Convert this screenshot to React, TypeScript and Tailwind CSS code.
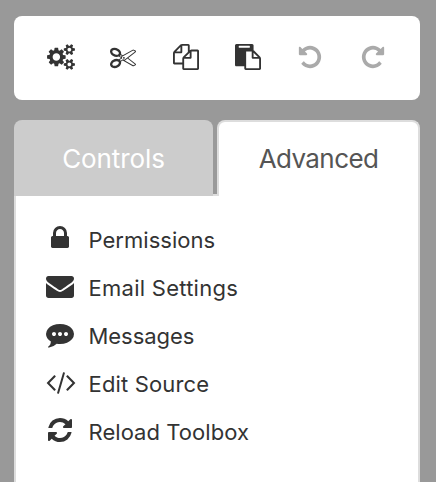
const COGS =
  'M896 896q0-106-75-181t-181-75-181 75-75 181 75 181 181 75 181-75 75-181zm768 512q0-52-38-90t-90-38-90 38-38 90q0 53 37.5 90.5t90.5 37.5 90.5-37.5 37.5-90.5zm0-1024q0-52-38-90t-90-38-90 38-38 90q0 53 37.5 90.5t90.5 37.5 90.5-37.5 37.5-90.5zm-384 421v185q0 10-7 19.5t-16 10.5l-155 24q-11 35-32 76 34 48 90 115 7 11 7 20 0 12-7 19-23 30-82.5 89.5t-78.5 59.5q-11 0-21-7l-115-90q-37 19-77 31-11 108-23 155-7 24-30 24h-186q-11 0-20-7.5t-10-17.5l-23-153q-34-10-75-31l-118 89q-7 7-20 7-11 0-21-8-144-133-144-160 0-9 7-19 10-14 41-53t47-61q-23-44-35-82l-152-24q-10-1-17-9.5t-7-19.5v-185q0-10 7-19.5t16-10.5l155-24q11-35 32-76-34-48-90-115-7-11-7-20 0-12 7-20 22-30 82-89t79-59q11 0 21 7l115 90q34-18 77-32 11-108 23-154 7-24 30-24h186q11 0 20 7.5t10 17.5l23 153q34 10 75 31l118-89q8-7 20-7 11 0 21 8 144 133 144 160 0 8-7 19-12 16-42 54t-45 60q23 48 34 82l152 23q10 2 17 10.5t7 19.5zm640 533v140q0 16-149 31-12 27-30 52 51 113 51 138 0 4-4 7-122 71-124 71-8 0-46-47t-52-68q-20 2-30 2t-30-2q-14 21-52 68t-46 47q-2 0-124-71-4-3-4-7 0-25 51-138-18-25-30-52-149-15-149-31v-140q0-16 149-31 13-29 30-52-51-113-51-138 0-4 4-7 4-2 35-20t59-34 30-16q8 0 46 46.5t52 67.5q20-2 30-2t30 2q51-71 92-112l6-2q4 0 124 70 4 3 4 7 0 25-51 138 17 23 30 52 149 15 149 31zm0-1024v140q0 16-149 31-12 27-30 52 51 113 51 138 0 4-4 7-122 71-124 71-8 0-46-47t-52-68q-20 2-30 2t-30-2q-14 21-52 68t-46 47q-2 0-124-71-4-3-4-7 0-25 51-138-18-25-30-52-149-15-149-31v-140q0-16 149-31 13-29 30-52-51-113-51-138 0-4 4-7 4-2 35-20t59-34 30-16q8 0 46 46.5t52 67.5q20-2 30-2t30 2q51-71 92-112l6-2q4 0 124 70 4 3 4 7 0 25-51 138 17 23 30 52 149 15 149 31z';
const CUT =
  'M960 896q26 0 45 19t19 45-19 45-45 19-45-19-19-45 19-45 45-19zm300 64l507 398q28 20 25 56-5 35-35 51l-128 64q-13 7-29 7-17 0-31-8l-690-387-110 66q-8 4-12 5 14 49 10 97-7 77-56 147.5t-132 123.5q-132 84-277 84-136 0-222-78-90-84-79-207 7-76 56-147t131-124q132-84 278-84 83 0 151 31 9-13 22-22l122-73-122-73q-13-9-22-22-68 31-151 31-146 0-278-84-82-53-131-124t-56-147q-5-59 15.5-113t63.5-93q85-79 222-79 145 0 277 84 83 52 132 123t56 148q4 48-10 97 4 1 12 5l110 66 690-387q14-8 31-8 16 0 29 7l128 64q30 16 35 51 3 36-25 56zm-681-260q46-42 21-108t-106-117q-92-59-192-59-74 0-113 36-46 42-21 108t106 117q92 59 192 59 74 0 113-36zm-85 745q81-51 106-117t-21-108q-39-36-113-36-100 0-192 59-81 51-106 117t21 108q39 36 113 36 100 0 192-59zm178-613l96 58v-11q0-36 33-56l14-8-79-44-26 26q-3 3-10 11t-12 12q-2 2-4 3.5t-3 2.5zm224 224l96 32 736-576-128-64-768 431v113l-160 96 9 8q2 2 7 6 4 4 11 12t11 12l26 26zm704 416l128-64-520-408-177 138q-2 3-13 7z';
const COPY =
  'M1696 384q40 0 68 28t28 68v1216q0 40-28 68t-68 28h-960q-40 0-68-28t-28-68v-288h-544q-40 0-68-28t-28-68v-672q0-40 20-88t48-76l408-408q28-28 76-48t88-20h416q40 0 68 28t28 68v328q68-40 128-40h416zm-544 213l-299 299h299v-299zm-640-384l-299 299h299v-299zm196 647l316-316v-416h-384v416q0 40-28 68t-68 28h-416v640h512v-256q0-40 20-88t48-76zm956 804v-1152h-384v416q0 40-28 68t-68 28h-416v640h896z';
const PASTE =
  'M768 1664h896v-640h-416q-40 0-68-28t-28-68v-416h-384v1152zm256-1440v-64q0-13-9.5-22.5t-22.5-9.5h-704q-13 0-22.5 9.5t-9.5 22.5v64q0 13 9.5 22.5t22.5 9.5h704q13 0 22.5-9.5t9.5-22.5zm256 672h299l-299-299v299zm512 128v672q0 40-28 68t-68 28h-960q-40 0-68-28t-28-68v-160h-544q-40 0-68-28t-28-68v-1344q0-40 28-68t68-28h1088q40 0 68 28t28 68v328q21 13 36 28l408 408q28 28 48 76t20 88z';
const UNDO =
  'M1664 896q0 156-61 298t-164 245-245 164-298 61q-172 0-327-72.5t-264-204.5q-7-10-6.5-22.5t8.5-20.5l137-138q10-9 25-9 16 2 23 12 73 95 179 147t225 52q104 0 198.5-40.5t163.5-109.5 109.5-163.5 40.5-198.5-40.5-198.5-109.5-163.5-163.5-109.5-198.5-40.5q-98 0-188 35.5t-160 101.5l137 138q31 30 14 69-17 40-59 40h-448q-26 0-45-19t-19-45v-448q0-42 40-59 39-17 69 14l130 129q107-101 244.5-156.5t284.5-55.5q156 0 298 61t245 164 164 245 61 298z';
const LOCK =
  'M640 768h512v-192q0-106-75-181t-181-75-181 75-75 181v192zm832 96v576q0 40-28 68t-68 28h-960q-40 0-68-28t-28-68v-576q0-40 28-68t68-28h32v-192q0-184 132-316t316-132 316 132 132 316v192h32q40 0 68 28t28 68z';
const ENVELOPE =
  'M1792 710v794q0 66-47 113t-113 47h-1472q-66 0-113-47t-47-113v-794q44 49 101 87 362 246 497 345 57 42 92.5 65.5t94.5 48 110 24.5h2q51 0 110-24.5t94.5-48 92.5-65.5q170-123 498-345 57-39 100-87zm0-294q0 79-49 151t-122 123q-376 261-468 325-10 7-42.5 31t-54 38.5-52 32.5-57.5 27-50 9h-2q-23 0-50-9t-57.5-27-52-32.5-54-38.5-42.5-31q-91-64-262-182.5t-205-142.5q-62-42-117-115.5t-55-136.5q0-78 41.5-130t118.5-52h1472q65 0 112.5 47t47.5 113z';
const COMMENT =
  'M640 896q0-53-37.5-90.5t-90.5-37.5-90.5 37.5-37.5 90.5 37.5 90.5 90.5 37.5 90.5-37.5 37.5-90.5zm384 0q0-53-37.5-90.5t-90.5-37.5-90.5 37.5-37.5 90.5 37.5 90.5 90.5 37.5 90.5-37.5 37.5-90.5zm384 0q0-53-37.5-90.5t-90.5-37.5-90.5 37.5-37.5 90.5 37.5 90.5 90.5 37.5 90.5-37.5 37.5-90.5zm384 0q0 174-120 321.5t-326 233-450 85.5q-110 0-211-18-173 173-435 229-52 10-86 13-12 1-22-6t-13-18q-4-15 20-37 5-5 23.5-21.5t25.5-23.5 23.5-25.5 24-31.5 20.5-37 20-48 14.5-57.5 12.5-72.5q-146-90-229.5-216.5t-83.5-269.5q0-174 120-321.5t326-233 450-85.5 450 85.5 326 233 120 321.5z';
const CODE =
  'M617 1399l-50 50q-10 10-23 10t-23-10l-466-466q-10-10-10-23t10-23l466-466q10-10 23-10t23 10l50 50q10 10 10 23t-10 23l-393 393 393 393q10 10 10 23t-10 23zm591-1067l-373 1291q-4 13-15.5 19.5t-23.5 2.5l-62-17q-13-4-19.5-15.5t-2.5-24.5l373-1291q4-13 15.5-19.5t23.5-2.5l62 17q13 4 19.5 15.5t2.5 24.5zm657 651l-466 466q-10 10-23 10t-23-10l-50-50q-10-10-10-23t10-23l393-393-393-393q-10-10-10-23t10-23l50-50q10-10 23-10t23 10l466 466q10 10 10 23t-10 23z';
const REFRESH =
  'M1639 1056q0 5-1 7-64 268-268 434.5t-478 166.5q-146 0-282.5-55t-243.5-157l-129 129q-19 19-45 19t-45-19-19-45v-448q0-26 19-45t45-19h448q26 0 45 19t19 45-19 45l-137 137q71 66 161 102t187 36q134 0 250-65t186-179q11-17 53-117 8-23 30-23h192q13 0 22.5 9.5t9.5 22.5zm25-800v448q0 26-19 45t-45 19h-448q-26 0-45-19t-19-45 19-45l138-138q-148-137-349-137-134 0-250 65t-186 179q-11 17-53 117-8 23-30 23h-199q-13 0-22.5-9.5t-9.5-22.5v-7q65-268 270-434.5t480-166.5q146 0 284 55.5t245 156.5l130-129q19-19 45-19t45 19 19 45z';

type IconProps = { path: string; width?: number; className: string };

function Icon({ path, width = 1792, className }: IconProps) {
  return (
    <svg viewBox={`0 0 ${width} 1792`} fill="currentColor" className={className} aria-hidden="true">
      <path d={path} />
    </svg>
  );
}

const tools = [
  { name: 'Settings', path: COGS, width: 1920, className: 'h-[26px] w-[28px]' },
  { name: 'Cut', path: CUT, className: 'h-[26px] w-[26px]' },
  { name: 'Copy', path: COPY, className: 'h-[26px] w-[26px]' },
  { name: 'Paste', path: PASTE, className: 'h-[26px] w-[26px]' },
  { name: 'Undo', path: UNDO, className: 'h-[26px] w-[26px] text-[#aaa]' },
  { name: 'Redo', path: UNDO, className: 'h-[26px] w-[26px] -scale-x-100 text-[#aaa]' },
];

const items = [
  { label: 'Permissions', path: LOCK, className: 'h-7 w-7', tracking: 'tracking-[0.03px]' },
  { label: 'Email Settings', path: ENVELOPE, className: 'h-7 w-7', tracking: 'tracking-[0.26px]' },
  { label: 'Messages', path: COMMENT, className: 'h-7 w-7', tracking: 'tracking-[-0.05px]' },
  { label: 'Edit Source', path: CODE, width: 1920, className: 'ml-0.5 h-7 w-[30px]', tracking: 'tracking-[0.16px]' },
  { label: 'Reload Toolbox', path: REFRESH, className: 'h-7 w-7', tracking: 'tracking-[0.05px]' },
];

export default function App() {
  return (
    <div className="flex h-[482px] w-[436px] flex-col overflow-hidden bg-[#999] pl-3.5 pr-4 pt-4 font-['Inter',sans-serif] text-[#333]">
      <div className="grid h-[84px] shrink-0 grid-cols-6 rounded-lg bg-white px-4 pt-[27.5px]">
        {tools.map((t) => (
          <button key={t.name} aria-label={t.name} className="flex items-start justify-center">
            <Icon path={t.path} width={t.width} className={`${t.className} shrink-0`} />
          </button>
        ))}
      </div>

      <div className="mt-5 flex h-[76px] shrink-0 text-[26px] leading-none">
        <button className="flex w-[199px] items-center justify-center rounded-t-lg bg-[#ccc] pt-0.5 text-white">
          <span className="tracking-[-0.1px]">Controls</span>
        </button>
        <div className="w-1 border-b-2 border-[#ddd]" />
        <button className="flex w-[203px] items-center justify-center rounded-t-lg border-2 border-b-0 border-[#ddd] bg-white text-[#555]">
          <span className="tracking-[-0.6px]">Advanced</span>
        </button>
      </div>

      <ul className="flex grow flex-col border-x-2 border-[#ddd] bg-white pl-[30px] pt-5">
        {items.map((it) => (
          <li key={it.label} className="flex h-12 items-center">
            <span className="mb-1 flex w-7 shrink-0 justify-center">
              <Icon path={it.path} width={it.width} className={`${it.className} shrink-0`} />
            </span>
            <span className={`ml-[14.5px] text-[22px] leading-none ${it.tracking}`}>{it.label}</span>
          </li>
        ))}
      </ul>
    </div>
  );
}
